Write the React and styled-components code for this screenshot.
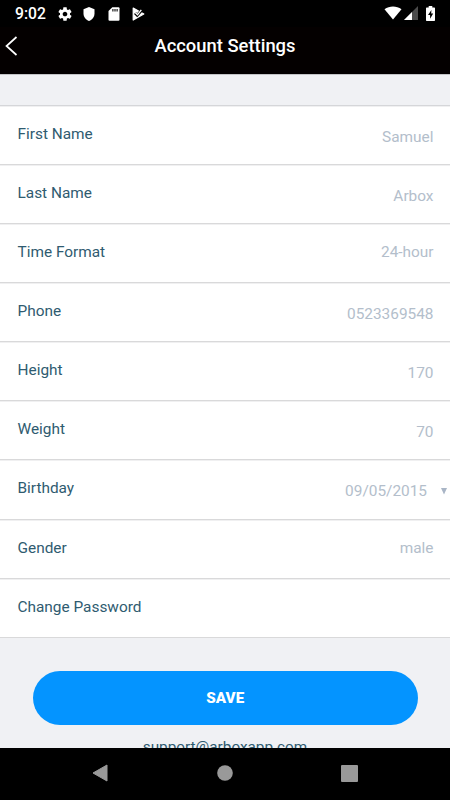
import React from "react";
import styled, { createGlobalStyle } from "styled-components";

const rows = [
  { label: "First Name", value: "Samuel", drop: 6 },
  { label: "Last Name", value: "Arbox", drop: 6 },
  { label: "Time Format", value: "24-hour" },
  { label: "Phone", value: "0523369548", drop: 6 },
  { label: "Height", value: "170", drop: 6 },
  { label: "Weight", value: "70", drop: 6 },
  { label: "Birthday", value: "09/05/2015", drop: 6, picker: true },
  { label: "Gender", value: "male" },
  { label: "Change Password" },
];

const StatusBar = () => (
  <StyledStatus>
    <Clock>9:02</Clock>
    <StatusIcons>
      <svg width="16" height="16" viewBox="0 0 24 24" fill="#fff">
        <path d="M19.43 12.98c.04-.32.07-.64.07-.98s-.03-.66-.07-.98l2.11-1.65c.19-.15.24-.42.12-.64l-2-3.46c-.12-.22-.39-.3-.61-.22l-2.49 1c-.52-.4-1.08-.73-1.69-.98l-.38-2.65C14.46 2.18 14.25 2 14 2h-4c-.25 0-.46.18-.49.42l-.38 2.65c-.61.25-1.17.59-1.69.98l-2.49-1c-.23-.09-.49 0-.61.22l-2 3.46c-.13.22-.07.49.12.64l2.11 1.65c-.04.32-.07.65-.07.98s.03.66.07.98l-2.11 1.65c-.19.15-.24.42-.12.64l2 3.46c.12.22.39.3.61.22l2.49-1c.52.4 1.08.73 1.69.98l.38 2.65c.03.24.24.42.49.42h4c.25 0 .46-.18.49-.42l.38-2.65c.61-.25 1.17-.59 1.69-.98l2.49 1c.23.09.49 0 .61-.22l2-3.46c.12-.22.07-.49-.12-.64l-2.11-1.65zM12 15.5c-1.93 0-3.5-1.57-3.5-3.5s1.57-3.5 3.5-3.5 3.5 1.57 3.5 3.5-1.57 3.5-3.5 3.5z" />
      </svg>
      <svg width="16" height="16" viewBox="0 0 16 16" fill="#fff">
        <path d="M8 1l5.5 2.2v4.3c0 3.4-2.2 6.3-5.5 7.5-3.3-1.2-5.5-4.1-5.5-7.5V3.2z" />
      </svg>
      <svg width="16" height="16" viewBox="0 0 16 16">
        <path d="M6.3 1.2h6.2a1 1 0 0 1 1 1v11.6a1 1 0 0 1-1 1h-9a1 1 0 0 1-1-1V5z" fill="#fff" />
        <path d="M6.9 3v2.6M9 3v2.6M11.1 3v2.6" stroke="#000" strokeWidth="1.1" />
      </svg>
      <svg width="16" height="16" viewBox="0 0 16 16">
        <path d="M3.2 2L13.8 8 3.2 14z" fill="#fff" stroke="#fff" strokeWidth="1.2" strokeLinejoin="round" />
        <path d="M5 7l2.2 2.2L12.8 3" fill="none" stroke="#000" strokeWidth="2.8" />
        <path d="M5.2 6.5l2.3 2.3 3.8-5" fill="none" stroke="#fff" strokeWidth="1.4" />
      </svg>
    </StatusIcons>
    <SignalIcons>
      <svg width="18" height="14" viewBox="0 0 18 14">
        <path d="M0.5 3.2C5.5-.4 12.5-.4 17.5 3.2L9 13.6z" fill="#fff" />
      </svg>
      <svg width="14" height="14" viewBox="0 0 14 14">
        <path d="M14 0v14H0z" fill="#4b4b4b" />
        <path d="M8 6v8H0z" fill="#fff" />
      </svg>
      <svg width="9" height="15" viewBox="0 0 9 15">
        <path d="M2.7 0h3.6v1.5H8.3a.7.7 0 0 1 .7.7v12.1a.7.7 0 0 1-.7.7H.7a.7.7 0 0 1-.7-.7V2.2a.7.7 0 0 1 .7-.7h2z" fill="#fff" />
        <path d="M5.4 4L2 9h2.1v3.8L7.2 7.5H5.2z" fill="#000" />
      </svg>
    </SignalIcons>
  </StyledStatus>
);

const App = () => (
  <>
    <GlobalStyle />
    <Screen>
      <StatusBar />
      <Header>
        <Back aria-label="Back">
          <svg width="14" height="22" viewBox="0 0 14 22">
            <path d="M12.5 2L2.5 11l10 9" fill="none" stroke="#fff" strokeWidth="1.7" />
          </svg>
        </Back>
        <Title>Account Settings</Title>
      </Header>
      <Content>
        <List>
          {rows.map((row) => (
            <Row key={row.label}>
              <Label>{row.label}</Label>
              {row.value && (
                <Value $drop={row.drop} $picker={row.picker}>
                  {row.value}
                  {row.picker && (
                    <svg width="6" height="7" viewBox="0 0 6 7">
                      <path d="M0 0h6L3 6.5z" fill="#a9b5c6" />
                    </svg>
                  )}
                </Value>
              )}
            </Row>
          ))}
        </List>
        <SaveButton>SAVE</SaveButton>
        <Support>support@arboxapp.com</Support>
      </Content>
      <NavBar>
        <svg width="16" height="18" viewBox="0 0 16 18">
          <path d="M15 1v16L1 9z" fill="#999" stroke="#999" strokeLinejoin="round" />
        </svg>
        <svg width="16" height="16" viewBox="0 0 16 16">
          <circle cx="8" cy="8" r="7.8" fill="#999" />
        </svg>
        <svg width="17" height="17" viewBox="0 0 17 17">
          <rect width="17" height="17" rx="1" fill="#999" />
        </svg>
      </NavBar>
    </Screen>
  </>
);

const GlobalStyle = createGlobalStyle`
  * {
    box-sizing: border-box;
  }
  body {
    margin: 0;
    font-family: Roboto, sans-serif;
  }
  svg {
    display: block;
    flex-shrink: 0;
  }
`;

const Screen = styled.div`
  width: 450px;
  height: 800px;
  display: flex;
  flex-direction: column;
  overflow: hidden;
  background: #f0f1f4;
`;

const StyledStatus = styled.div`
  height: 27px;
  flex-shrink: 0;
  display: flex;
  align-items: center;
  padding: 0 15px 0 15px;
  background: #000;
`;

const Clock = styled.span`
  width: 42px;
  color: #fff;
  font-size: 15.7px;
  font-weight: 500;
  line-height: 27px;
`;

const StatusIcons = styled.div`
  display: flex;
  gap: 8.4px;
`;

const SignalIcons = styled.div`
  display: flex;
  align-items: center;
  gap: 2px;
  margin-left: auto;

  svg {
    margin-top: -1px;
  }

  svg:last-child {
    margin-left: 6px;
  }
`;

const Header = styled.header`
  height: 47px;
  flex-shrink: 0;
  display: grid;
  grid-template-columns: 40px 1fr 40px;
  background: #040000;
`;

const Back = styled.button`
  border: none;
  background: none;
  padding: 8px 0 0 4px;
  display: flex;
  align-items: flex-start;
`;

const Title = styled.h1`
  margin: 0;
  color: #fff;
  text-align: center;
  font-size: 18.4px;
  font-weight: 500;
  line-height: 38px;
`;

const Content = styled.main`
  flex: 1;
  min-height: 0;
  overflow: hidden;
  display: flex;
  flex-direction: column;
  padding-top: 30px;
  border-top: 1px solid #c3c4c7;
`;

const List = styled.div`
  flex-shrink: 0;
  border-top: 1px solid #d5d6d9;
`;

const Row = styled.div`
  height: 59.08px;
  display: flex;
  justify-content: space-between;
  padding: 0 16.5px 0 17.5px;
  background: #fff;
  border-bottom: 1px solid #d9d9da;
  box-shadow: inset 0 1px #f0f0f1;
`;

const Label = styled.span`
  color: #2f5b70;
  font-size: 15.4px;
  line-height: 57px;
`;

const Value = styled.span`
  display: flex;
  align-items: center;
  gap: 14px;
  height: 56px;
  margin-top: ${(props) => (props.$drop ? props.$drop / 2 : 0)}px;
  margin-right: ${(props) => (props.$picker ? -13.5 : 0)}px;
  color: #b3becb;
  font-size: 15.4px;
`;

const SaveButton = styled.button`
  height: 54.5px;
  flex-shrink: 0;
  margin: 33px 32px 0 32.5px;
  border: none;
  border-radius: 28px;
  background: #0494ff;
  color: #fff;
  font-family: inherit;
  font-size: 15.2px;
  font-weight: 900;
`;

const Support = styled.div`
  flex-shrink: 0;
  margin-top: 12px;
  text-align: center;
  color: #2f5b70;
  font-size: 15.3px;
  line-height: 20px;
`;

const NavBar = styled.nav`
  height: 52.5px;
  flex-shrink: 0;
  display: flex;
  align-items: center;
  justify-content: space-between;
  padding: 0 92px 1px;
  background: #000;
`;

export default App;
